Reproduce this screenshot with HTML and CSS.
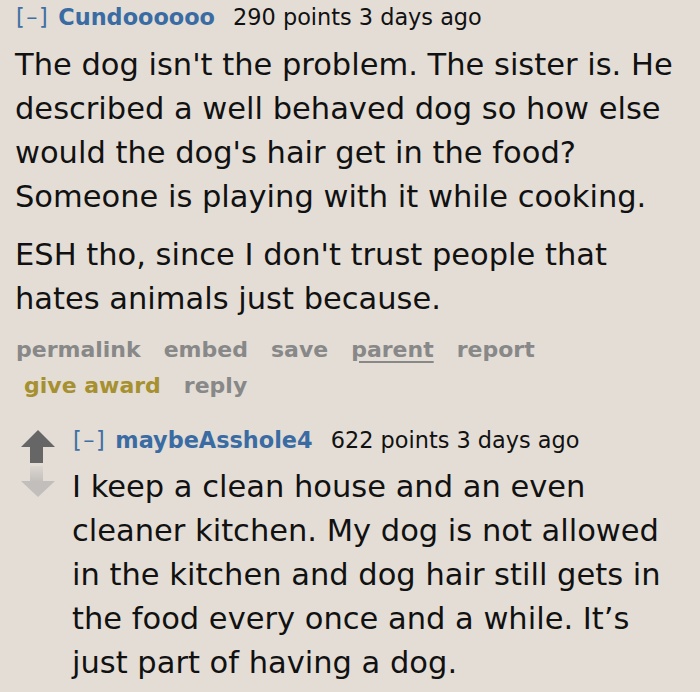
FILE: index.html
```html
<!DOCTYPE html>
<html>
<head>
<meta charset="utf-8">
<link rel="stylesheet" href="styles.css">
</head>
<body>
<div class="comment first">
  <p class="tagline"><a class="expand">[–]</a> <a class="author">Cundoooooo</a> <span class="score">290 points</span> 3 days ago</p>
  <div class="md">
    <p>The dog isn't the problem. The sister is. He described a well behaved dog so how else would the dog's hair get in the food? Someone is playing with it while cooking.</p>
    <p>ESH tho, since I don't trust people that hates animals just because.</p>
  </div>
  <ul class="buttons">
    <li>permalink</li>
    <li>embed</li>
    <li>save</li>
    <li class="parent">parent</li>
    <li>report</li>
  </ul>
  <ul class="buttons second-row">
    <li class="gild">give award</li>
    <li>reply</li>
  </ul>
</div>
<div class="comment child">
  <div class="midcol">
    <svg class="arrow" width="34" height="33" viewBox="0 0 34 33"><polygon points="17,0 34,17 0,17" fill="#666"/><rect x="9" y="16" width="13" height="17" fill="#666"/></svg>
    <svg class="arrow" width="34" height="31" viewBox="0 0 34 31"><defs><linearGradient id="g" x1="0" y1="0" x2="0" y2="1"><stop offset="0" stop-color="#c2bebb" stop-opacity="0.2"/><stop offset="1" stop-color="#c2bebb"/></linearGradient></defs><rect x="9" y="0" width="13" height="16" fill="url(#g)"/><polygon points="0,15 34,15 17,31" fill="#c2bebb"/></svg>
  </div>
  <div class="entry">
    <p class="tagline"><a class="expand">[–]</a> <a class="author">maybeAsshole4</a> <span class="score">622 points</span> 3 days ago</p>
    <div class="md">
      <p>I keep a clean house and an even cleaner kitchen. My dog is not allowed in the kitchen and dog hair still gets in the food every once and a while. It’s just part of having a dog.</p>
    </div>
  </div>
</div>
</body>
</html>
```
FILE: styles.css
```css
html, body {
  margin: 0;
  padding: 0;
  background: #e3ddd6;
  font-family: "DejaVu Sans", Verdana, sans-serif;
  color: #111;
  overflow: hidden;
}

p { margin: 0; }

.comment.first {
  padding: 4px 15px 0 15px;
}

.tagline {
  font-size: 22.4px;
  line-height: 26px;
  color: #111;
}

.expand {
  color: #3f6fa3;
  letter-spacing: 1.5px;
  margin-left: 1px;
  margin-right: 2px;
}

.author {
  color: #3a6ca3;
  font-weight: bold;
  margin-right: 11px;
}

.md {
  margin-top: 13px;
  font-size: 30.5px;
  line-height: 44px;
  padding-right: 6px;
}

.md p + p {
  margin-top: 14px;
}

.buttons {
  list-style: none;
  margin: 11px 0 0 0;
  padding: 0 0 0 1px;
  display: flex;
  gap: 23px;
  font-size: 22px;
  line-height: 36px;
  font-weight: bold;
  color: #888;
}

.buttons.second-row {
  margin-top: 0;
  padding-left: 9px;
}

.parent {
  text-decoration: underline;
  text-underline-offset: 4px;
}

.gild {
  color: #a6902f;
}

.comment.child {
  display: flex;
  margin-top: 23px;
}

.midcol {
  margin-left: 21px;
  width: 34px;
  padding-top: 3px;
  display: flex;
  flex-direction: column;
  gap: 3px;
}

.arrow { display: block; }

.entry {
  margin-left: 17px;
  flex: 1;
}

.entry .md {
  margin-top: 12px;
  padding-right: 14px;
}
```
